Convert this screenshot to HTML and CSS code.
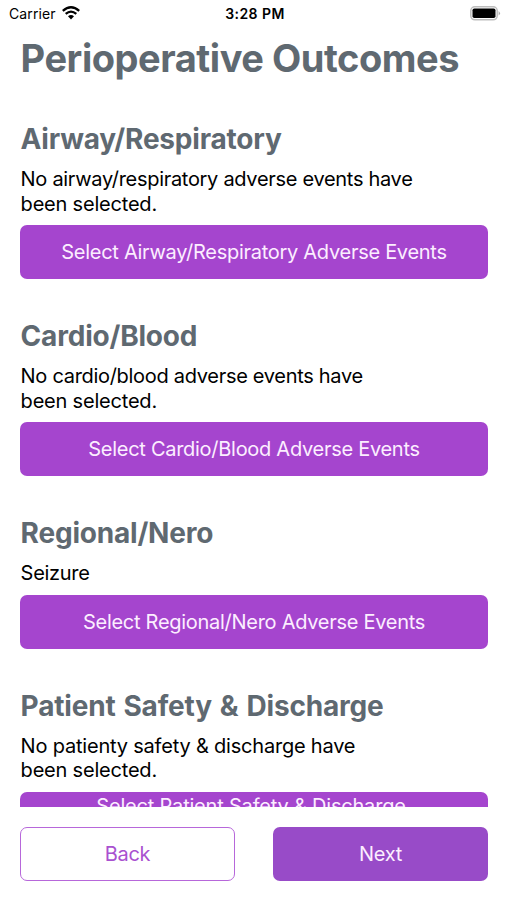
FILE: index.html
```html
<!DOCTYPE html>
<html lang="en">
<head>
<meta charset="utf-8">
<title>Perioperative Outcomes</title>
<link rel="stylesheet" href="styles.css">
</head>
<body>
<div class="status">
  <div class="carrier"><span class="carrier-name">Carrier</span>
    <svg class="wifi" viewBox="0 0 18 14" width="18" height="14"><path d="M.8 4.8Q9-2.2 17.2 4.8M3.7 7.8Q9 3.4 14.3 7.8" fill="none" stroke="#000" stroke-width="2.3"/><path d="M6 10.2Q9 7.8 12 10.2L9 13.4Z"/></svg>
  </div>
  <div class="time"><span>3:28 PM</span></div>
  <svg class="battery" viewBox="0 0 31 15" width="31" height="15"><rect x=".8" y=".8" width="26.4" height="13" rx="4" fill="#fff" stroke="#bdbdbd" stroke-width="1.5"/><rect x="2.5" y="2.5" width="23" height="9.6" rx="1.8"/><path d="M28.6 5Q31.4 7.3 28.6 9.6Z" fill="#aaa"/></svg>
</div>
<main class="content">
  <h1><span>Perioperative Outcomes</span></h1>
  <section><h2><span>Airway/Respiratory</span></h2><p><span>No airway/respiratory adverse events have</span><br><span class="loose">been selected.</span></p><button><span>Select Airway/Respiratory Adverse Events</span></button></section>
  <section><h2><span>Cardio/Blood</span></h2><p><span>No cardio/blood adverse events have</span><br><span class="loose">been selected.</span></p><button><span>Select Cardio/Blood Adverse Events</span></button></section>
  <section><h2><span>Regional/Nero</span></h2><p><span>Seizure</span></p><button><span>Select Regional/Nero Adverse Events</span></button></section>
  <section><h2><span>Patient Safety &amp; Discharge</span></h2><p><span class="loose">No patienty safety &amp; discharge have</span><br><span class="loose">been selected.</span></p><button class="tall-label"><span>Select Patient Safety &amp; Discharge</span></button></section>
</main>
<footer><button class="back">Back</button><button class="next">Next</button></footer>
</body>
</html>
```
FILE: styles.css
```css
* { box-sizing: border-box; }
body { margin: 0; width: 507px; height: 900px; overflow: hidden; display: flex; flex-direction: column; background: #fff; color: #000; font-family: Inter, "Liberation Sans", sans-serif; }
.status { height: 27px; flex: none; display: grid; grid-template-columns: 1fr auto 1fr; align-items: center; padding: 0 6px 0 9px; font-size: 14px; }
.carrier { display: flex; align-items: center; gap: 6px; letter-spacing: .12px; }
.wifi { margin-top: -1px; }
.time { font-weight: 600; letter-spacing: .45px; }
.battery { justify-self: end; }
.content { height: 780px; flex: none; overflow: hidden; padding: 8px 19px 0 20px; }
h1, h2, p { margin: 0; padding-left: .6px; white-space: nowrap; }
h1 { font-size: 38px; line-height: 46px; font-weight: 700; color: #5f6971; letter-spacing: -.46px; margin-bottom: 41px; }
section + section { margin-top: 40px; }
h2 { font-size: 28px; line-height: 34px; font-weight: 700; color: #5f6971; letter-spacing: -.2px; word-spacing: 1.6px; }
p { margin-top: 11px; font-size: 20px; line-height: 24.5px; letter-spacing: -.3px; }
.loose { letter-spacing: -.2px; }
button { display: block; width: 100%; height: 54px; border: 0; border-radius: 7px; padding: 0; background: #a545ce; color: #fceeff; font: 400 20px Inter, sans-serif; letter-spacing: -.28px; white-space: nowrap; }
section button { margin-top: 9px; }
.tall-label { display: flex; justify-content: center; align-items: flex-start; padding: 2px 6px 0 0; line-height: 24px; letter-spacing: -.2px; }
footer { display: flex; justify-content: space-between; padding: 20px 19px 0 20px; }
footer button { width: 215px; }
.back { background: #fff; border: 1.5px solid #b767da; color: #a951d0; }
.next { background: #984bc8; }
```
